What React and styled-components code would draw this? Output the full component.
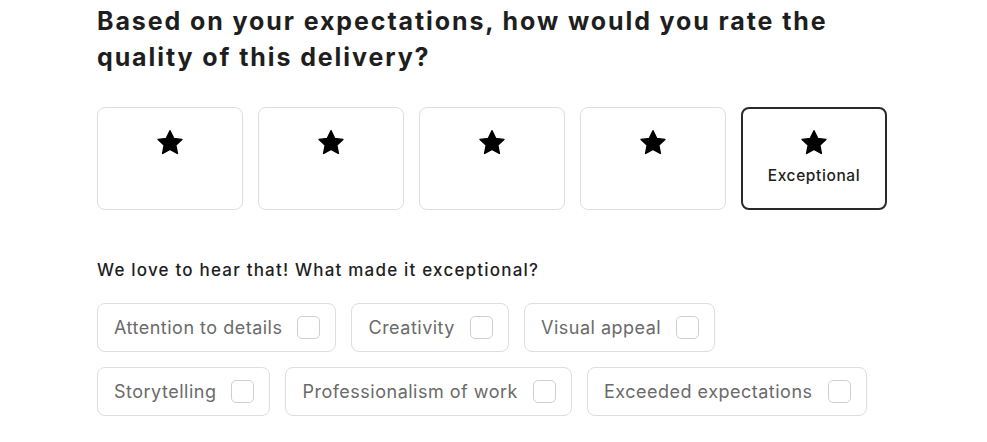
import React, { useState } from 'react';
import styled, { createGlobalStyle } from 'styled-components';

const GlobalStyle = createGlobalStyle`
    body {
        margin: 0;
        background: #ffffff;
        font-family: Inter, "Noto Sans", sans-serif;
    }
`;

const Page = styled.div`
    padding: 3px 0 0 97px;
    width: 800px;
`;

const Title = styled.h1`
    margin: 0;
    width: 770px;
    font-size: 25px;
    line-height: 36px;
    font-weight: 700;
    letter-spacing: 1.9px;
    color: #1e1e1e;
`;

const Ratings = styled.div`
    display: flex;
    gap: 15px;
    margin-top: 32px;
`;

const RatingCard = styled.button`
    width: 146px;
    height: 103px;
    box-sizing: border-box;
    background: #fff;
    border: ${p => (p.$active ? '2px solid #2a2a2a' : '1px solid #dedede')};
    border-radius: 8px;
    display: flex;
    flex-direction: column;
    align-items: center;
    padding: ${p => (p.$active ? '19px 0 0' : '20px 0 0')};
    cursor: pointer;
    font-family: inherit;
`;

const RatingLabel = styled.span`
    margin-top: 8px;
    font-size: 15.5px;
    font-weight: 500;
    letter-spacing: 0.6px;
    color: #1e1e1e;
`;

const Prompt = styled.p`
    margin: 50px 0 0;
    font-size: 17px;
    font-weight: 500;
    letter-spacing: 1.2px;
    color: #1e1e1e;
`;

const Chips = styled.div`
    display: flex;
    flex-wrap: wrap;
    gap: 15px;
    margin-top: 23px;
    width: 790px;
`;

const Chip = styled.label`
    display: flex;
    align-items: center;
    gap: 15px;
    height: 49px;
    box-sizing: border-box;
    padding: 0 15px 0 16px;
    border: 1px solid #dedede;
    border-radius: 8px;
    font-size: 18px;
    letter-spacing: 0.5px;
    color: #6a6a6a;
    cursor: pointer;
`;

const Box = styled.span`
    width: 23px;
    height: 23px;
    box-sizing: border-box;
    border: 1px solid #cfcfcf;
    border-radius: 5px;
    background: ${p => (p.$checked ? '#2a2a2a' : '#fff')};
`;

const Star = () => (
    <svg width="30" height="30" viewBox="0 0 24 24">
        <path
            d="M12 2.2l2.9 6.1 6.6.8-4.9 4.6 1.3 6.6L12 17.1l-5.9 3.2 1.3-6.6-4.9-4.6 6.6-.8z"
            fill="#000"
            stroke="#000"
            strokeWidth="1.2"
            strokeLinejoin="round"
        />
    </svg>
);

const reasons = [
    'Attention to details',
    'Creativity',
    'Visual appeal',
    'Storytelling',
    'Professionalism of work',
    'Exceeded expectations',
];

const App = () => {
    const [rating] = useState(5);
    const [checked, setChecked] = useState({});

    return (
        <Page>
            <GlobalStyle />
            <Title>
                Based on your expectations, how would you rate the quality of this delivery?
            </Title>
            <Ratings>
                {[1, 2, 3, 4, 5].map(n => (
                    <RatingCard key={n} $active={n === rating}>
                        <Star />
                        {n === rating && <RatingLabel>Exceptional</RatingLabel>}
                    </RatingCard>
                ))}
            </Ratings>
            <Prompt>We love to hear that! What made it exceptional?</Prompt>
            <Chips>
                {reasons.map(r => (
                    <Chip key={r} onClick={() => setChecked({ ...checked, [r]: !checked[r] })}>
                        {r}
                        <Box $checked={checked[r]} />
                    </Chip>
                ))}
            </Chips>
        </Page>
    );
};

export default App;
